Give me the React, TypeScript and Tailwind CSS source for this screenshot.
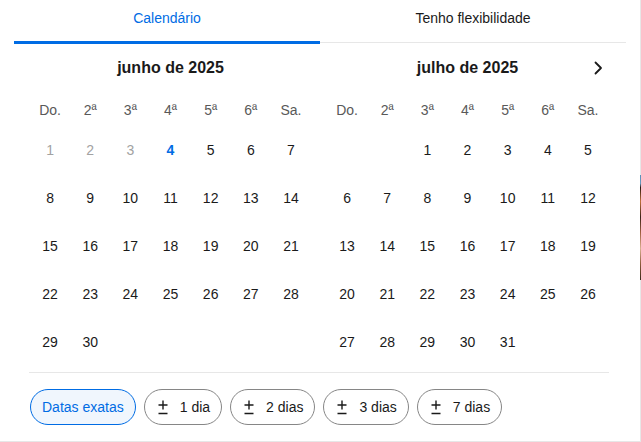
import React from "react";

const dayNames = ["Do.", "2ª", "3ª", "4ª", "5ª", "6ª", "Sa."];

function Month({ title, offset, days, past = 0, today = 0, chevron = false }: { title: string; offset: number; days: number; past?: number; today?: number; chevron?: boolean }) {
  const cells: (number | null)[] = [];
  for (let i = 0; i < offset; i++) cells.push(null);
  for (let d = 1; d <= days; d++) cells.push(d);
  return (
    <div className="relative w-[281px]">
      <div className="h-[24px] flex items-center justify-center text-[16px] font-bold text-[#1a1a1a]">{title}</div>
      {chevron && (
        <div className="absolute right-[-2px] top-0 h-[24px] w-[24px] flex items-center justify-center">
          <svg width="16" height="16" viewBox="0 0 16 16" fill="none">
            <path d="M5.5 2.5 L11 8 L5.5 13.5" stroke="#1a1a1a" strokeWidth="1.8" strokeLinecap="round" strokeLinejoin="round" />
          </svg>
        </div>
      )}
      <div className="mt-[15px] grid grid-cols-7 h-[31px] items-center text-[14px] text-[#595959]">
        {dayNames.map((d) => (
          <div key={d} className="text-center">{d}</div>
        ))}
      </div>
      <div className="grid grid-cols-7">
        {cells.map((c, i) => (
          <div key={i} className="h-[48px] flex items-center justify-center text-[14px]">
            {c !== null && (
              <span className={c === today ? "font-bold text-[#006ce4]" : c <= past ? "text-[#a2a2a2]" : "text-[#1a1a1a]"}>{c}</span>
            )}
          </div>
        ))}
      </div>
    </div>
  );
}

function PlusMinus() {
  return (
    <svg width="14" height="18" viewBox="0 0 14 18" fill="none">
      <path d="M7 2.5 V11.5 M2.5 7 H11.5 M2.5 15.5 H11.5" stroke="#1a1a1a" strokeWidth="1.4" />
    </svg>
  );
}

export default function App() {
  return (
    <div className="relative w-[641px] h-[442px] bg-white" style={{ fontFamily: '"Liberation Sans", Arial, sans-serif' }}>
      <div className="w-[641px] h-[442px] border-r border-b border-[#e7e7e7] pl-[14px] pr-[14px]">
        <div className="flex h-[44px]">
          <div className="flex-1 flex justify-center pt-[8px] text-[14px] text-[#006ce4] border-b-[3px] border-[#006ce4]">Calendário</div>
          <div className="flex-1 flex justify-center pt-[8px] text-[14px] text-[#1a1a1a] relative">
            Tenho flexibilidade
            <div className="absolute left-0 right-0 bottom-[1px] h-[1px] bg-[#e7e7e7]" />
          </div>
        </div>
        <div className="mt-[12px] pl-[16px] flex gap-[16px]">
          <Month title="junho de 2025" offset={0} days={30} past={3} today={4} />
          <Month title="julho de 2025" offset={2} days={31} chevron />
        </div>
        <div className="mt-[6px] ml-[15px] w-[580px] h-[1px] bg-[#e7e7e7]" />
        <div className="mt-[16px] ml-[16px] flex gap-[8px] text-[14px]">
          <div className="h-[36px] px-[11px] rounded-full border border-[#006ce4] bg-[#f0f6fd] text-[#006ce4] flex items-center">Datas exatas</div>
          {["1 dia", "2 dias", "3 dias", "7 dias"].map((t) => (
            <div key={t} className="h-[36px] px-[11px] rounded-full border border-[#868686] text-[#1a1a1a] flex items-center gap-[10px]">
              <PlusMinus />
              <span>{t}</span>
            </div>
          ))}
        </div>
      </div>
      <div className="absolute left-[640px] top-[175px] w-[1px] h-[105px]" style={{ background: "linear-gradient(#5a8fb8 0%, #6a9cc0 8%, #2a1a10 12%, #c0703a 25%, #3a2418 40%, #a06040 55%, #d8b090 70%, #8a5a3a 85%, #3a2a1a 100%)" }} />
    </div>
  );
}
